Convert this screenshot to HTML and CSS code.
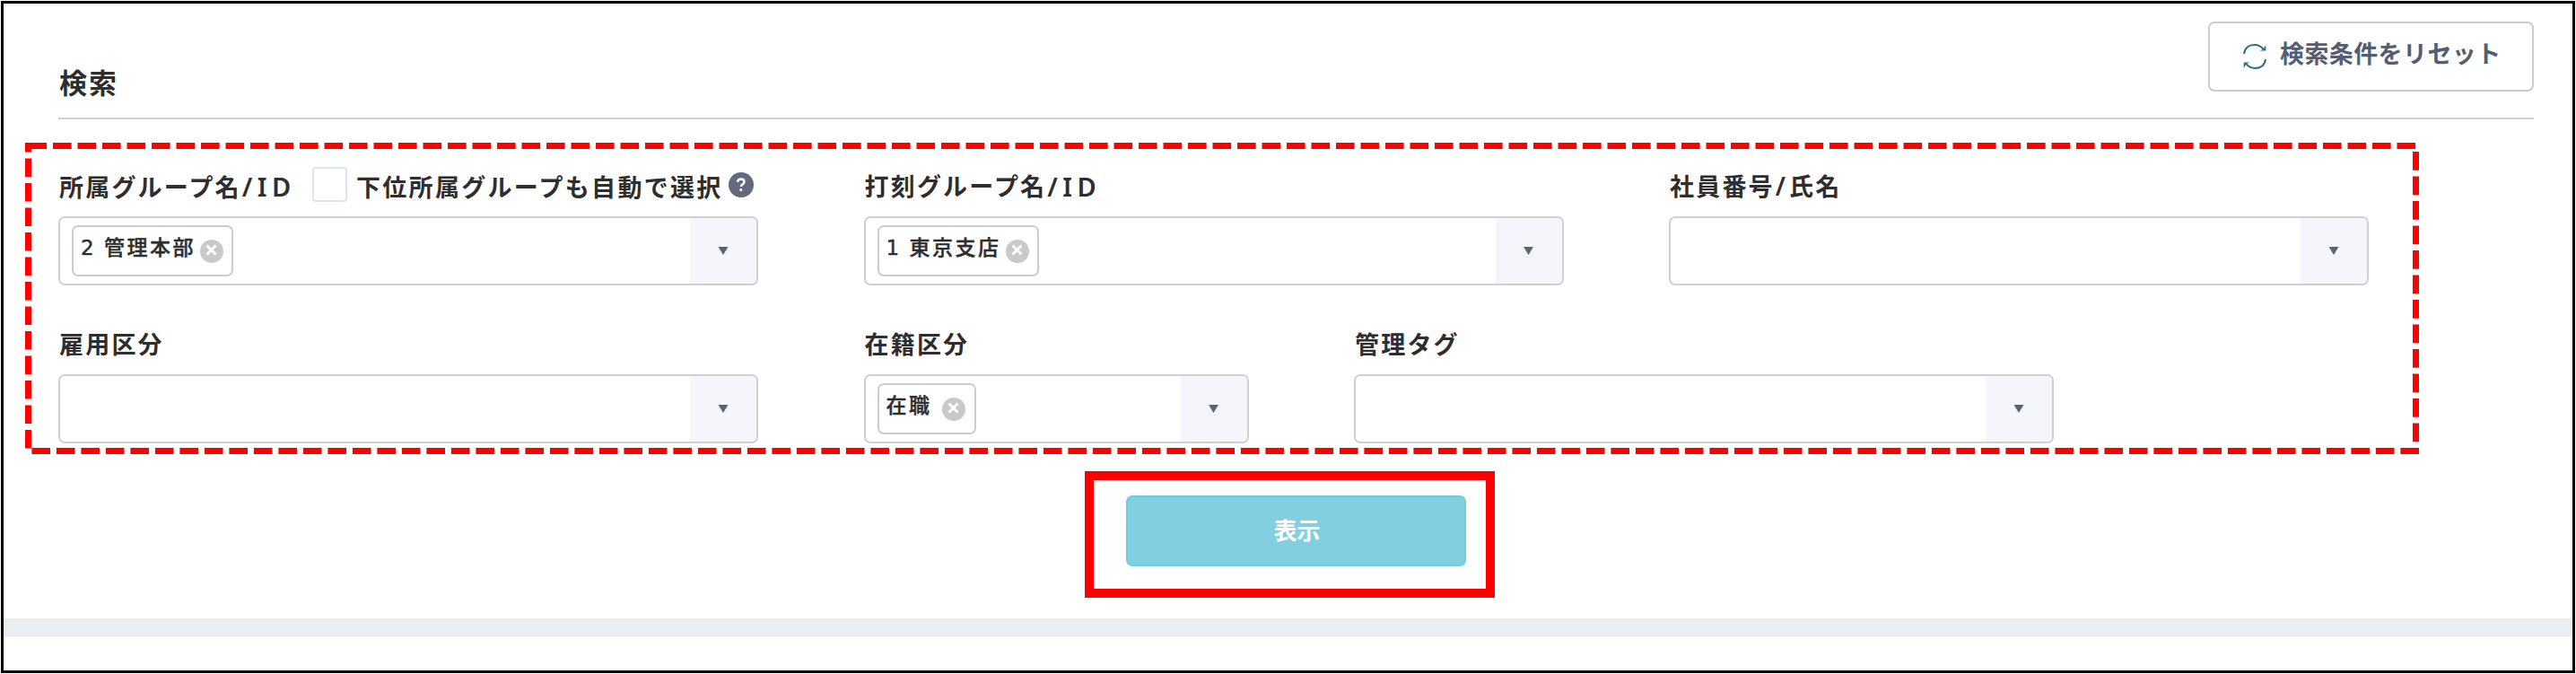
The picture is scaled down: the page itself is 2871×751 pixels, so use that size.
FILE: index.html
```html
<!DOCTYPE html>
<html lang="ja">
<head>
    <meta charset="UTF-8">
    <title>検索</title>
    <link rel="stylesheet" href="styles.css">
</head>
<body>
    <div class="frame">
        <div class="header">
            <h2 class="title">検索</h2>
            <button type="button" class="resetBtn">
                <svg class="resetIcon" width="26" height="30" viewBox="0 0 26 30">
                    <path d="M1 12C2 5 7 2 12.5 2c4.500 0 8 2 10.500 5.500M25 18c-1 7-6 10-11.500 10-4.500 0-8-2-10.500-5.500" fill="none" stroke="#2c6a85" stroke-width="2"/>
                    <path d="M25.300 2v6.500h-7l4-1.500zM.7 28v-6.500h7l-4 1.500z" fill="#2c6a85"/>
                </svg>
                <span class="resetText">検索条件をリセット</span>
            </button>
        </div>

        <form class="searchForm" onsubmit="return false;">
            <div class="row">
                <div class="field">
                    <div class="label">
                        <span class="mainLabel">所属グループ名<span class="latin">/ID</span></span>
                        <span class="checkbox"></span>
                        <span class="subLabel">下位所属グループも自動で選択</span>
                        <svg class="help" width="28" height="28" viewBox="0 0 28 28">
                            <circle cx="14" cy="14" r="14" fill="#636a7d"/>
                            <path d="M10 11c.2-2.500 1.700-3.500 3.800-3.500s3.700 1.200 3.700 3.200c0 2.600-3.600 2.500-3.600 5.300" fill="none" stroke="#fff" stroke-width="2.400"/>
                            <circle cx="13.800" cy="19.600" r="1.600" fill="#fff"/>
                        </svg>
                    </div>
                    <div class="select">
                        <span class="tag"><span class="tagText">2 管理本部</span><svg class="remove" width="26" height="26" viewBox="0 0 26 26"><circle cx="13" cy="13" r="13" fill="#c9c9c9"/><path d="M7.500 6.500l10 10M17.500 6.500l-10 10" stroke="#fff" stroke-width="3"/></svg></span>
                        <span class="arrow"></span>
                    </div>
                </div>
                <div class="field">
                    <div class="label">打刻グループ名<span class="latin">/ID</span></div>
                    <div class="select">
                        <span class="tag"><span class="tagText">1 東京支店</span><svg class="remove" width="26" height="26" viewBox="0 0 26 26"><circle cx="13" cy="13" r="13" fill="#c9c9c9"/><path d="M7.500 6.500l10 10M17.500 6.500l-10 10" stroke="#fff" stroke-width="3"/></svg></span>
                        <span class="arrow"></span>
                    </div>
                </div>
                <div class="field">
                    <div class="label">社員番号<span class="slash">/</span>氏名</div>
                    <div class="select"><span class="arrow"></span></div>
                </div>
            </div>

            <div class="row">
                <div class="field">
                    <div class="label">雇用区分</div>
                    <div class="select"><span class="arrow"></span></div>
                </div>
                <div class="field short">
                    <div class="label">在籍区分</div>
                    <div class="select">
                        <span class="tag small"><span class="tagText">在職</span><svg class="remove" width="26" height="26" viewBox="0 0 26 26"><circle cx="13" cy="13" r="13" fill="#c9c9c9"/><path d="M7.500 6.500l10 10M17.500 6.500l-10 10" stroke="#fff" stroke-width="3"/></svg></span>
                        <span class="arrow"></span>
                    </div>
                </div>
                <div class="field">
                    <div class="label">管理タグ</div>
                    <div class="select"><span class="arrow"></span></div>
                </div>
            </div>

            <div class="submitBox">
                <button type="submit" class="submitBtn">表示</button>
            </div>
        </form>

        <div class="divider"></div>
    </div>

    <!-- 検索条件を囲む赤い点線 -->
    <svg class="marker" width="2871" height="751">
        <rect x="31.500" y="162.500" width="2661" height="340" fill="none" stroke="#f00" stroke-width="7" stroke-dasharray="20.625 6.875"/>
    </svg>
</body>
</html>
```

FILE: styles.css
```css
* {
    box-sizing: border-box;
}

body {
    margin: 0;
    padding: 1px;
    height: 751px;
    overflow: hidden;
    background-color: #fff;
    color: #2e2e2e;
    font-family: "Noto Sans", "Noto Sans CJK JP", sans-serif;
}

button {
    font-family: inherit;
}

.frame {
    width: 2869px;
    height: 749px;
    border: 3px solid #000;
}

.header {
    display: flex;
    justify-content: space-between;
    height: 129px;
    margin: 0 43px 0 61px;
    border-bottom: 2px solid #d0d0d0;
}

.title {
    margin: 67px 0 0 1px;
    font-size: 31px;
    line-height: 42px;
    letter-spacing: 2px;
}

.resetBtn {
    display: flex;
    width: 363px;
    height: 78px;
    margin-top: 20px;
    padding: 0 0 0 37px;
    background-color: #fff;
    border: 2px solid #ccc;
    border-radius: 7px;
}

.resetIcon {
    margin-top: 22px;
}

.resetText {
    margin: 14px 0 0 15px;
    color: #545e70;
    font-size: 27px;
    font-weight: bold;
    line-height: 40px;
    letter-spacing: 0.4px;
    white-space: nowrap;
}

.searchForm {
    margin-left: 61px;
    padding-top: 48px;
}

.row {
    display: flex;
    gap: 117.5px;
    height: 176px;
}

.field {
    width: 780px;
}

.short {
    width: 429px;
}

.label {
    display: flex;
    height: 60px;
    padding-left: 1px;
    font-size: 27px;
    font-weight: 600;
    line-height: 53px;
    letter-spacing: 2.2px;
    white-space: nowrap;
}

.mainLabel {
    width: 262px;
}

.latin {
    margin-left: 1px;
    font-size: 29px;
    letter-spacing: 5.5px;
}

.slash {
    margin-left: 1px;
    font-size: 28px;
    letter-spacing: 4px;
}

.checkbox {
    width: 39px;
    height: 39px;
    margin: 5px 10px 0 20px;
    border: 2px solid #dfe3ea;
    border-radius: 4px;
}

.subLabel {
    padding-top: 1px;
    letter-spacing: 2.3px;
}

.help {
    margin: 11px 0 0 6px;
}

.select {
    display: flex;
    justify-content: space-between;
    height: 77px;
    padding-left: 13px;
    border: 2px solid #d0d0d0;
    border-radius: 7px;
    overflow: hidden;
}

.tag {
    display: flex;
    width: 180px;
    height: 57px;
    margin-top: 8px;
    padding-left: 8px;
    border: 2px solid #ccc;
    border-radius: 7px;
}

.small {
    width: 110px;
}

.tagText {
    width: 133px;
    font-family: "DejaVu Sans", "Noto Sans CJK JP", sans-serif;
    font-size: 23px;
    font-weight: 500;
    line-height: 46px;
    letter-spacing: 2.5px;
    word-spacing: -1px;
    white-space: nowrap;
    -webkit-text-stroke: 0.4px #2e2e2e;
}

.small .tagText {
    width: 62px;
}

.remove {
    margin-top: 14px;
}

.arrow {
    display: flex;
    justify-content: center;
    width: 74px;
    margin-left: auto;
    background-color: #f5f6fb;
}

.arrow::before {
    content: "";
    width: 11px;
    height: 9px;
    margin-top: 32px;
    background-color: #5c6373;
    clip-path: polygon(0 0, 100% 0, 50% 100%);
}

.submitBox {
    width: 457px;
    height: 141px;
    margin: -8px 0 0 1144px;
    padding: 17px 0 0 36px;
    border: 10px solid #f00;
}

.submitBtn {
    width: 379px;
    height: 79px;
    padding: 0 0 3px 2px;
    background-color: #82cfe0;
    border: 2px solid #6dcfe0;
    border-radius: 7px;
    color: #fff;
    font-size: 26px;
    font-weight: bold;
}

.divider {
    height: 20px;
    margin-top: 23px;
    background-color: #eaeef1;
}

.marker {
    position: absolute;
    top: 0;
    left: 0;
    pointer-events: none;
}
```
